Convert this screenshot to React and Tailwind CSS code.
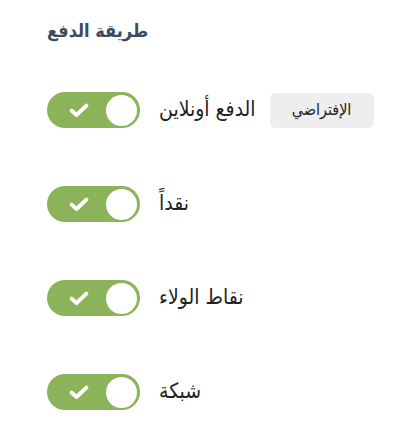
export default function App() {
  const rows = [
    { label: "الدفع أونلاين", badge: "الإفتراضي" },
    { label: "نقداً" },
    { label: "نقاط الولاء" },
    { label: "شبكة" },
  ];
  return (
    <div className="w-[410px] h-[430px] bg-white pl-[47px] pt-[14px]" style={{ fontFamily: '"DejaVu Sans Condensed", "DejaVu Sans", sans-serif' }}>
      <div className="text-[18px] font-bold text-[#3d4b5c] h-[32px] flex items-center">طريقة الدفع</div>
      <div className="flex flex-col gap-[58px] mt-[46px]">
        {rows.map((r, i) => (
          <div key={i} className="flex items-center h-[36px]">
            <div className="w-[93px] h-[36px] rounded-full bg-[#8ab35a] flex items-center justify-between pl-[21px] pr-[3px]">
              <svg width="22" height="18" viewBox="0 0 22 18">
                <path d="M3.5 9.5 L8.5 14 L18.5 4.5" fill="none" stroke="white" strokeWidth="3.8" strokeLinecap="round" strokeLinejoin="round" />
              </svg>
              <div className="w-[31px] h-[31px] rounded-full bg-white" />
            </div>
            <div className="ml-[19px] text-[21px] text-[#222]">{r.label}</div>
            {r.badge && (
              <div className="ml-[14px] w-[104px] h-[35px] rounded-[6px] bg-[#eeeeee] flex items-center justify-center text-[16px] text-[#222]">
                {r.badge}
              </div>
            )}
          </div>
        ))}
      </div>
    </div>
  );
}
